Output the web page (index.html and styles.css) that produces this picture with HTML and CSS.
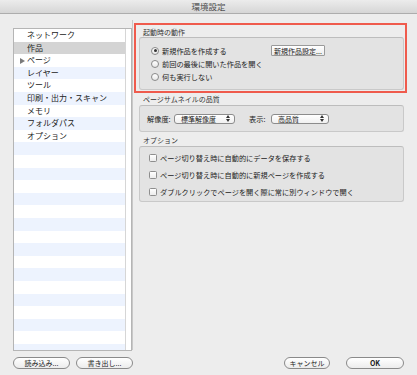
FILE: index.html
```html
<!DOCTYPE html>
<html lang="ja">
<head>
    <meta charset="UTF-8">
    <title>環境設定</title>
    <link rel="stylesheet" href="styles.css">
</head>
<body>

<div class="window">
    <div class="titlebar">環境設定</div>

    <div class="main">
        <!-- category list -->
        <div class="sidebar">
            <div class="list">
                <ul class="list-rows">
                    <li>ネットワーク</li>
                    <li class="selected">作品</li>
                    <li><span class="arrow"></span>ページ</li>
                    <li>レイヤー</li>
                    <li>ツール</li>
                    <li>印刷・出力・スキャン</li>
                    <li>メモリ</li>
                    <li>フォルダパス</li>
                    <li>オプション</li>
                </ul>
                <div class="list-scroll"></div>
            </div>
        </div>

        <!-- settings -->
        <div class="pane">
            <div class="highlight">
                <div class="section-title">起動時の動作</div>
                <div class="group group-startup">
                    <div class="radio-row first-row">
                        <label class="radio checked"><span class="radio-dot"></span>新規作品を作成する</label>
                        <button class="btn-square">新規作品設定...</button>
                    </div>
                    <div class="radio-row">
                        <label class="radio"><span class="radio-dot"></span>前回の最後に開いた作品を開く</label>
                    </div>
                    <div class="radio-row">
                        <label class="radio"><span class="radio-dot"></span>何も実行しない</label>
                    </div>
                </div>
            </div>

            <div class="section-title title-spaced">ページサムネイルの品質</div>
            <div class="group group-quality">
                <span class="field-label label-res">解像度:</span>
                <div class="popup popup-res">標準解像度<span class="popup-arrows"><svg width="4" height="7" viewBox="0 0 4 7"><path d="M0 3 L2 0 L4 3 Z M0 4 L2 7 L4 4 Z" fill="#333"/></svg></span></div>
                <span class="field-label label-view">表示:</span>
                <div class="popup popup-view">高品質<span class="popup-arrows"><svg width="4" height="7" viewBox="0 0 4 7"><path d="M0 3 L2 0 L4 3 Z M0 4 L2 7 L4 4 Z" fill="#333"/></svg></span></div>
            </div>

            <div class="section-title title-options">オプション</div>
            <div class="group group-options">
                <label class="check"><span class="check-box"></span>ページ切り替え時に自動的にデータを保存する</label>
                <label class="check"><span class="check-box"></span>ページ切り替え時に自動的に新規ページを作成する</label>
                <label class="check"><span class="check-box"></span>ダブルクリックでページを開く際に常に別ウィンドウで開く</label>
            </div>
        </div>
    </div>

    <div class="footer">
        <div class="footer-left">
            <button class="btn-pill btn-wide">読み込み...</button>
            <button class="btn-pill btn-wide btn-next">書き出し...</button>
        </div>
        <div class="footer-right">
            <button class="btn-pill btn-cancel">キャンセル</button>
            <button class="btn-pill btn-ok">OK</button>
        </div>
    </div>
</div>

</body>
</html>
```

FILE: styles.css
```css
* {
    box-sizing: border-box;
    margin: 0;
    padding: 0;
}

body {
    background: #ededed;
    font-family: "Noto Sans CJK JP", "Noto Sans", sans-serif;
    font-size: 7.2px;
    color: #222;
    width: 417px;
    height: 375px;
    overflow: hidden;
}

.titlebar {
    height: 14px;
    line-height: 13px;
    text-align: center;
    font-size: 8.5px;
    color: #4d4d4d;
    background: linear-gradient(#ececec, #d6d6d6);
    border-bottom: 1px solid #adadad;
}

.main {
    display: flex;
    height: 340px;
}

/* list */
.sidebar {
    padding: 14px 0 0 13px;
}

.list {
    display: flex;
    width: 119px;
    height: 323px;
    border: 1px solid #b5b5b5;
    background: #fff;
}

.list-rows {
    flex: 1;
    list-style: none;
    background: repeating-linear-gradient(#fff 0, #fff 12.6px, #edf3fe 12.6px, #edf3fe 25.2px);
}

.list-rows li {
    position: relative;
    height: 12.6px;
    line-height: 12.6px;
    padding-left: 13px;
    font-size: 8px;
    color: #222;
}

.list-rows li.selected {
    background: #d4d4d4;
}

.arrow {
    position: absolute;
    left: 6px;
    top: 3.5px;
    border-left: 5px solid #7a7a7a;
    border-top: 3px solid transparent;
    border-bottom: 3px solid transparent;
}

.list-scroll {
    width: 6px;
    border-left: 1px solid #d6d6d6;
    background: #fff;
}

/* right pane */
.pane {
    flex: 1;
    margin-top: 6px;
    height: 330px;
    border-left: 1px solid #c8c8c8;
    padding-top: 3px;
}

.highlight {
    margin-left: 1px;
    width: 273px;
    border: 2px solid #ef5b4d;
    padding: 0 0 1px 0;
}

.section-title {
    line-height: 9px;
    margin-top: 3px;
    padding-left: 7px;
    font-size: 7px;
    color: #333;
}

.title-spaced {
    margin-top: 1px;
    line-height: 10px;
    padding-left: 10px;
}

.title-options {
    margin-top: 3px;
    line-height: 10px;
    padding-left: 10px;
}

.group {
    width: 265px;
    margin-left: 6px;
    background: #e3e3e3;
    border: 1px solid #c9c9c9;
    border-top-color: #bdbdbd;
    border-radius: 3px;
}

.highlight .group {
    margin-left: 3px;
}

.group-startup {
    height: 53px;
    padding: 6px 0 0 11px;
}

.radio-row {
    display: flex;
    align-items: center;
    height: 13px;
}

.first-row .radio {
    width: 120px;
}

.radio, .check {
    display: flex;
    align-items: center;
    white-space: nowrap;
}

.radio-dot {
    position: relative;
    width: 8px;
    height: 8px;
    margin-right: 3px;
    border: 1px solid #8a8a8a;
    border-radius: 50%;
    background: linear-gradient(#fff, #e8e8e8);
}

.radio.checked .radio-dot::after {
    content: "";
    position: absolute;
    left: 1.5px;
    top: 1.5px;
    width: 3px;
    height: 3px;
    border-radius: 50%;
    background: #333;
}

.btn-square {
    width: 54px;
    height: 11px;
    font-family: inherit;
    font-size: 7px;
    color: #222;
    background: linear-gradient(#fff, #ececec);
    border: 1px solid #9a9a9a;
    border-radius: 1px;
}

.group-quality {
    display: flex;
    align-items: center;
    height: 27px;
    margin-top: 1px;
    padding-left: 7px;
}

.field-label {
    display: block;
}

.label-res {
    width: 27px;
}

.label-view {
    width: 22px;
    margin-left: 14px;
}

.popup {
    display: flex;
    align-items: center;
    justify-content: space-between;
    height: 10px;
    padding: 0 4px 0 6px;
    font-size: 7px;
    background: linear-gradient(#fff, #f0f0f0);
    border: 1px solid #8c8c8c;
    border-radius: 3px;
}

.popup-res {
    width: 61px;
}

.popup-view {
    width: 58px;
}

.popup-arrows {
    display: flex;
}

.group-options {
    margin-top: 1px;
    padding: 2px 0 1px 9px;
}

.check {
    height: 17px;
}

.check-box {
    width: 8px;
    height: 8px;
    margin-right: 3px;
    border: 1px solid #8e8e8e;
    border-radius: 1.5px;
    background: linear-gradient(#fff, #ececec);
}

/* bottom buttons */
.footer {
    display: flex;
    justify-content: space-between;
    margin-top: 3px;
    padding: 0 13px;
}

.footer-left, .footer-right {
    display: flex;
}

.btn-pill {
    height: 12px;
    font-family: inherit;
    font-size: 7px;
    color: #222;
    background: linear-gradient(#fff, #ececec);
    border: 1px solid #8a8a8a;
    border-radius: 6px;
}

.btn-wide {
    width: 57px;
}

.btn-next {
    margin-left: 6px;
}

.btn-cancel {
    width: 46px;
}

.btn-ok {
    width: 58px;
    margin-left: 16px;
    font-weight: bold;
}
```
